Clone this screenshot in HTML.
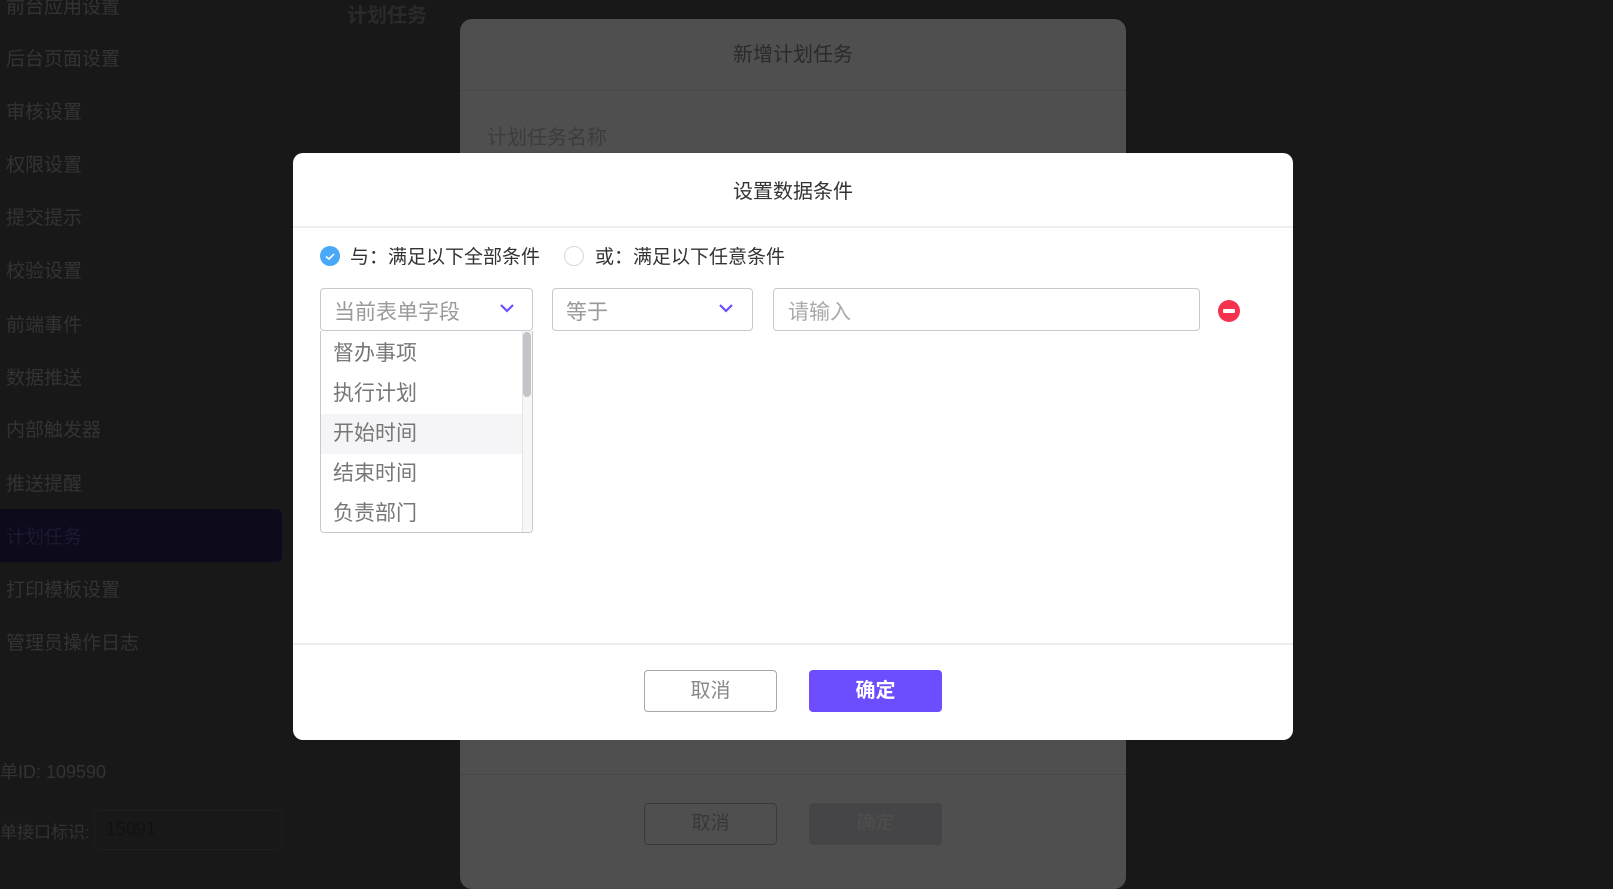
<!DOCTYPE html>
<html><head><meta charset="utf-8"><style>
*{margin:0;padding:0;box-sizing:border-box}
body{width:1613px;height:872px;overflow:hidden;background:#181818;font-family:"Liberation Sans","Noto Sans CJK SC",sans-serif;position:relative}
.a{position:absolute}
.si{position:absolute;left:6px;font-size:19px;color:#333;white-space:nowrap}
</style></head><body>
<div class="si" style="top:-8px">前台应用设置</div>
<div class="si" style="top:44px">后台页面设置</div>
<div class="si" style="top:97px">审核设置</div>
<div class="si" style="top:150px">权限设置</div>
<div class="si" style="top:203px">提交提示</div>
<div class="si" style="top:256px">校验设置</div>
<div class="si" style="top:310px">前端事件</div>
<div class="si" style="top:363px">数据推送</div>
<div class="si" style="top:415px">内部触发器</div>
<div class="si" style="top:469px">推送提醒</div>
<div class="a" style="left:0;top:509px;width:282px;height:53px;background:#0d0a1c;border-radius:0 6px 6px 0"></div>
<div class="si" style="top:522px;color:#1c1930">计划任务</div>
<div class="si" style="top:575px">打印模板设置</div>
<div class="si" style="top:628px">管理员操作日志</div>
<div class="a" style="left:0;top:758px;font-size:18px;color:#333;white-space:nowrap">单ID: 109590</div>
<div class="a" style="left:0;top:818px;font-size:17px;color:#333;white-space:nowrap">单接口标识:</div>
<div class="a" style="left:94px;top:810px;width:188px;height:40px;border:1px solid #1e1e1e;border-radius:4px;font-size:18px;color:#111;padding:8px 11px">15091</div>
<div class="a" style="left:347px;top:-1px;font-size:20px;font-weight:bold;color:#2a2a2a">计划任务</div>

<div class="a" style="left:460px;top:19px;width:666px;height:870px;background:#4f4f4f;border-radius:12px">
  <div class="a" style="left:0;top:0;width:100%;height:72px;border-bottom:1px solid #474747;text-align:center;line-height:72px;font-size:20px;color:#2a2a2a">新增计划任务</div>
  <div class="a" style="left:27px;top:102px;font-size:20px;color:#3c3c3c">计划任务名称</div>
  <div class="a" style="left:0;top:755px;width:100%;border-top:1px solid #474747"></div>
  <div class="a" style="left:184px;top:784px;width:133px;height:42px;border:1px solid #3a3a3a;border-radius:4px;text-align:center;line-height:40px;font-size:19px;color:#383838">取消</div>
  <div class="a" style="left:349px;top:784px;width:133px;height:42px;background:#454547;border-radius:4px;text-align:center;line-height:42px;font-size:19px;color:#4e4e4e">确定</div>
</div>

<div class="a" style="left:293px;top:153px;width:1000px;height:587px;background:#fff;border-radius:10px">
  <div class="a" style="left:0;top:0;width:100%;height:75px;border-bottom:2px solid #eceef2;text-align:center;line-height:78px;font-size:20px;color:#333">设置数据条件</div>
  <div class="a" style="left:27px;top:93px;width:20px;height:20px;border-radius:50%;background:#4aa8f8"><svg width="20" height="20" viewBox="0 0 20 20"><path d="M6 10.5l3 2.5 5-5" stroke="#fff" stroke-width="1.6" fill="none"/></svg></div>
  <div class="a" style="left:57px;top:89px;font-size:19px;color:#333">与：满足以下全部条件</div>
  <div class="a" style="left:271px;top:93px;width:20px;height:20px;border-radius:50%;border:1px solid #d8d8d8"></div>
  <div class="a" style="left:302px;top:89px;font-size:19px;color:#333">或：满足以下任意条件</div>

  <div class="a" style="left:27px;top:135px;width:213px;height:43px;border:1px solid #c8c8d0;border-radius:4px;font-size:21px;color:#9a9a9a;padding:7px 13px">当前表单字段</div>
  <svg class="a" style="left:206px;top:149px" width="16" height="12" viewBox="0 0 16 12"><path d="M2 3l6 6 6-6" stroke="#6d4cff" stroke-width="2.2" fill="none"/></svg>
  <div class="a" style="left:259px;top:135px;width:201px;height:43px;border:1px solid #c8c8d0;border-radius:4px;font-size:21px;color:#999;padding:7px 13px">等于</div>
  <svg class="a" style="left:425px;top:149px" width="16" height="12" viewBox="0 0 16 12"><path d="M2 3l6 6 6-6" stroke="#6d4cff" stroke-width="2.2" fill="none"/></svg>
  <div class="a" style="left:480px;top:135px;width:427px;height:43px;border:1px solid #c8c8d0;border-radius:4px;font-size:21px;color:#aaa;padding:7px 14px">请输入</div>
  <div class="a" style="left:925px;top:147px;width:22px;height:22px;border-radius:50%;background:#f5334f"><div class="a" style="left:5px;top:9px;width:12px;height:4px;background:#fff;border-radius:1px"></div></div>

  <div class="a" style="left:27px;top:178px;width:213px;height:202px;border:1px solid #c8c8d0;border-top:none;border-radius:0 0 4px 4px;overflow:hidden">
    <div style="font-size:21px;color:#777;line-height:40px;padding-top:3px">
      <div style="padding-left:12px">督办事项</div>
      <div style="padding-left:12px">执行计划</div>
      <div style="padding-left:12px;background:#f5f5f7">开始时间</div>
      <div style="padding-left:12px">结束时间</div>
      <div style="padding-left:12px">负责部门</div>
    </div>
    <div class="a" style="right:0;top:0;width:10px;height:100%;background:#f7f7f7;border-left:1px solid #e4e4e4"></div>
    <div class="a" style="right:1px;top:1px;width:8px;height:65px;background:#c4c4c8;border-radius:4px"></div>
  </div>

  <div class="a" style="left:0;top:490px;width:100%;border-top:2px solid #eceef2"></div>
  <div class="a" style="left:351px;top:517px;width:133px;height:42px;border:1px solid #a8a8a8;border-radius:4px;text-align:center;line-height:40px;font-size:20px;color:#888">取消</div>
  <div class="a" style="left:516px;top:517px;width:133px;height:42px;background:#6e4dff;border-radius:4px;text-align:center;line-height:42px;font-size:20px;color:#fff;font-weight:bold">确定</div>
</div>
</body></html>
